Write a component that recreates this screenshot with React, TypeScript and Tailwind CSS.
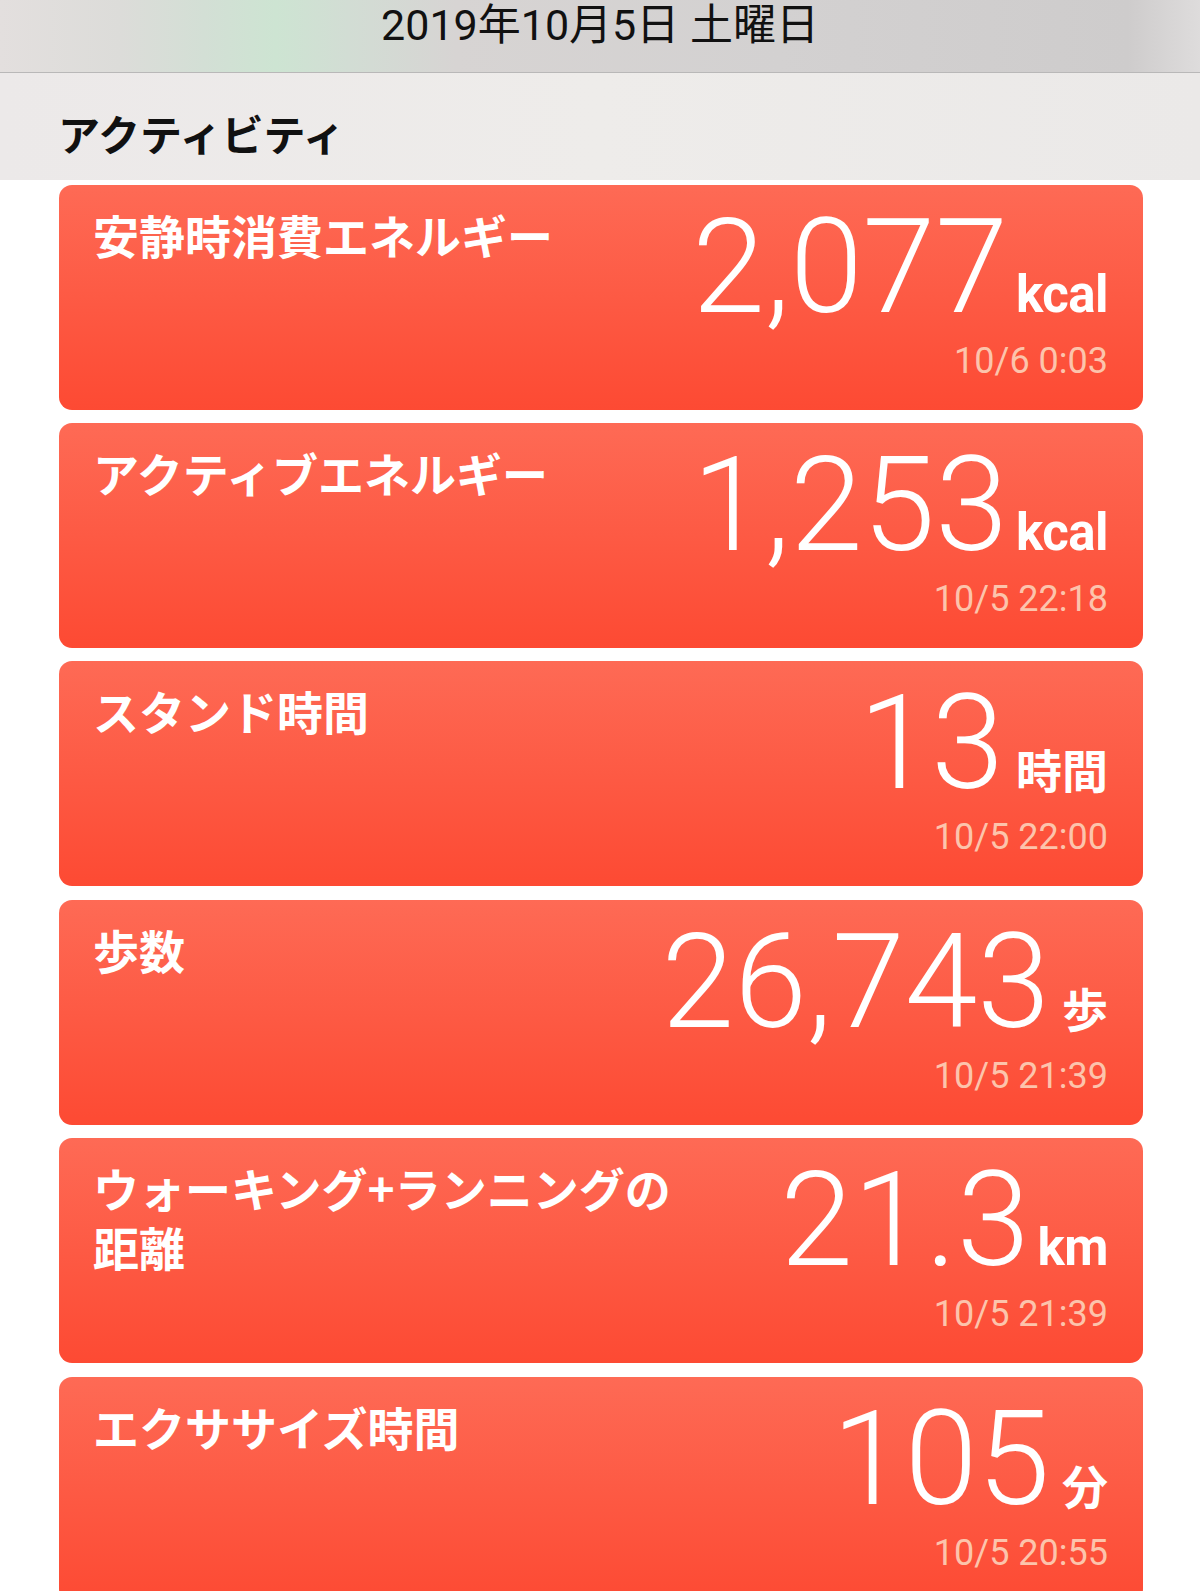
// Health app "Activity" summary screen for a single day.

const jp = "font-['Noto_Sans_CJK_JP',sans-serif]";
const num = "font-['Roboto','Noto_Sans_CJK_JP',sans-serif]";

interface Metric {
  label: string;
  value: string;
  unit: string;
  date: string;
  latinUnit?: boolean;
}

const metrics: Metric[] = [
  { label: "安静時消費エネルギー", value: "2,077", unit: "kcal", date: "10/6 0:03", latinUnit: true },
  { label: "アクティブエネルギー", value: "1,253", unit: "kcal", date: "10/5 22:18", latinUnit: true },
  { label: "スタンド時間", value: "13", unit: "時間", date: "10/5 22:00" },
  { label: "歩数", value: "26,743", unit: "歩", date: "10/5 21:39" },
  { label: "ウォーキング+ランニングの\n距離", value: "21.3", unit: "km", date: "10/5 21:39", latinUnit: true },
  { label: "エクササイズ時間", value: "105", unit: "分", date: "10/5 20:55" },
];

function MetricCard({ metric }: { metric: Metric }) {
  return (
    <div className="flex h-[225px] shrink-0 rounded-[13px] bg-[linear-gradient(180deg,#fe6a55_0%,#fd5a44_50%,#fd4a33_100%)] pl-[34px] pr-[35px]">
      <div
        className={`${jp} flex-1 whitespace-pre-line pt-[20px] text-[46px] font-bold leading-[59px] text-white`}
      >
        {metric.label}
      </div>
      <div className="flex shrink-0 flex-col items-end pt-[17px]">
        <div className={`${num} flex items-baseline text-white`}>
          <span className="text-[131px] font-light leading-[131px]">{metric.value}</span>
          {metric.latinUnit ? (
            <span className="ml-[8px] text-[51px] font-bold leading-[51px] tracking-[-0.01em]">
              {metric.unit}
            </span>
          ) : (
            <span className="ml-[12px] text-[46px] font-bold leading-[46px]">{metric.unit}</span>
          )}
        </div>
        <div className={`${num} mt-[10px] text-[36px] leading-[36px] text-[#fcc4ac]`}>
          {metric.date}
        </div>
      </div>
    </div>
  );
}

export default function App() {
  return (
    <div className="h-[1591px] w-[1200px] overflow-hidden bg-white">
      {/* Blurred navigation bar with the date */}
      <div className="h-[73px] border-b border-[#b9b8b8] bg-[linear-gradient(90deg,#e3dfde_0%,#dcdcd9_10%,#d3dfd5_17%,#cde4d2_23%,#d2ddd4_29%,#d7d4d3_38%,#d3d1d1_65%,#cecccc_94%,#dedcdc_100%)] pt-[3px]">
        <div className={`${num} text-center text-[43px] leading-[44px] text-[#111]`}>
          2019年10月5日 土曜日
        </div>
      </div>

      {/* Section header */}
      <div className="h-[107px] bg-[linear-gradient(90deg,#ece9e9_0%,#eeecea_50%,#ebe9e8_100%)] pl-[58px] pt-[36px]">
        <div className={`${jp} text-[42px] font-bold leading-[48px] text-[#111]`}>
          アクティビティ
        </div>
      </div>

      <div className="ml-[59px] mr-[57px] mt-[4.6px] flex flex-col gap-[13.4px]">
        {metrics.map((m) => (
          <MetricCard key={m.label} metric={m} />
        ))}
      </div>
    </div>
  );
}
